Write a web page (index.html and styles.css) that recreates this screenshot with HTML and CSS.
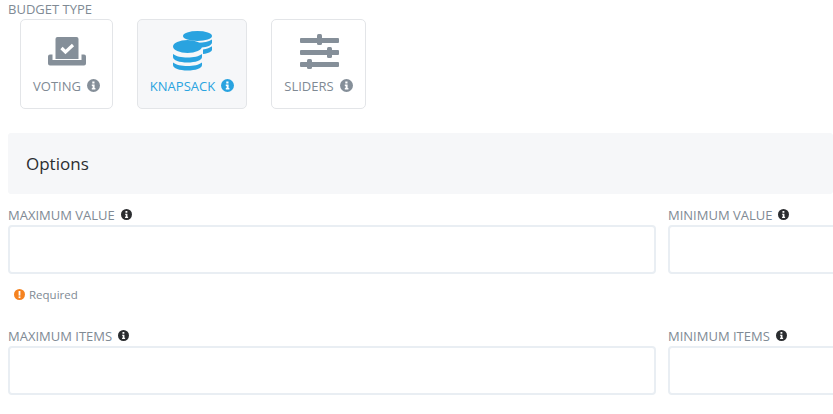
FILE: index.html
```html
<!DOCTYPE html>
<html lang="en">
<head>
<meta charset="utf-8">
<title>Budget type</title>
<link rel="stylesheet" href="styles.css">
</head>
<body>
<div class="page">
  <div class="section-label">BUDGET TYPE</div>
  <div class="cards">
    <div class="card card-voting">
      <div class="icon-slot"><svg width="40" height="29" viewBox="0 0 40 29"><path fill="#858f99" d="M8.500 2a2 2 0 0 1 2-2h19a2 2 0 0 1 2 2v20h-23z"/><path fill="#858f99" d="M1 19.500a2 2 0 0 1 2-2h2.500v5.500h29v-5.500H37a2 2 0 0 1 2 2v7a2 2 0 0 1-2 2H3a2 2 0 0 1-2-2z"/><path fill="none" stroke="#fff" stroke-width="3.200" d="M14.500 11l4 4 7.500-7"/></svg></div>
      <div class="card-label"><span>VOTING</span><svg width="13" height="13" viewBox="0 0 13 13"><circle cx="6.500" cy="6.500" r="6.500" fill="#858f99"/><path fill="#fff" d="M5.300 2.500h2.200v2H5.300zM4.800 5.500h2.800v3.600h.8v1.400H4.800V9.100h.8V6.900h-.8z"/></svg></div>
    </div>
    <div class="card card-active">
      <div class="icon-slot"><svg width="40" height="40" viewBox="0 0 40 40"><g fill="#29a3e0"><ellipse cx="25.500" cy="5" rx="14.500" ry="5"/><path d="M26 11.800c5.500 0 10.500-1 14-3.300v3c0 2.600-4.800 4.800-10.500 5-1-1.800-3-3.500-6-4.500z"/><path d="M31 18.500c3.700-.4 7-1.600 9-3.200v3.200c0 2-3 3.800-9 4.500z"/><ellipse cx="15.500" cy="15.500" rx="14.500" ry="6.500"/><path d="M1 23c3 2.400 8.500 3.500 14.500 3.500S27 25.400 30 23v3c0 3.300-6.500 5.500-14.500 5.500S1 29.300 1 26z"/><path d="M1 31.500c3 2.400 8.500 3.500 14.500 3.500S27 33.900 30 31.500V34c0 3.300-6.500 5.500-14.500 5.500S1 37.300 1 34z"/></g></svg></div>
      <div class="card-label"><span>KNAPSACK</span><svg width="13" height="13" viewBox="0 0 13 13"><circle cx="6.500" cy="6.500" r="6.500" fill="#29a3e0"/><path fill="#fff" d="M5.300 2.500h2.200v2H5.300zM4.800 5.500h2.800v3.600h.8v1.400H4.800V9.100h.8V6.900h-.8z"/></svg></div>
    </div>
    <div class="card card-sliders">
      <div class="icon-slot"><svg width="40" height="35" viewBox="0 0 40 35"><g fill="#858f99"><rect x="1" y="4" width="39" height="5" rx="1"/><rect x="1" y="16" width="39" height="5" rx="1"/><rect x="1" y="28" width="39" height="5" rx="1"/><rect x="18" y="0" width="5" height="11" rx="1.500"/><rect x="28" y="13" width="5" height="11" rx="1.500"/><rect x="8" y="25" width="5" height="10" rx="1.500"/></g></svg></div>
      <div class="card-label"><span>SLIDERS</span><svg width="13" height="13" viewBox="0 0 13 13"><circle cx="6.500" cy="6.500" r="6.500" fill="#858f99"/><path fill="#fff" d="M5.300 2.500h2.200v2H5.300zM4.800 5.500h2.800v3.600h.8v1.400H4.800V9.100h.8V6.900h-.8z"/></svg></div>
    </div>
  </div>
  <div class="band">Options</div>
  <div class="fields">
    <div class="field">
      <label class="field-label">MAXIMUM VALUE<svg width="11" height="11" viewBox="0 0 13 13"><circle cx="6.500" cy="6.500" r="6.500" fill="#2b2d30"/><path fill="#fff" d="M5.300 2.500h2.200v2H5.300zM4.800 5.500h2.800v3.600h.8v1.400H4.800V9.100h.8V6.900h-.8z"/></svg></label>
      <div class="input"></div>
      <div class="error"><svg width="11" height="11" viewBox="0 0 11 11"><circle cx="5.500" cy="5.500" r="5.500" fill="#f5821f"/><rect x="4.600" y="2" width="1.800" height="4.600" fill="#fff"/><rect x="4.600" y="7.400" width="1.800" height="1.700" fill="#fff"/></svg><span>Required</span></div>
    </div>
    <div class="field">
      <label class="field-label">MINIMUM VALUE<svg width="11" height="11" viewBox="0 0 13 13"><circle cx="6.500" cy="6.500" r="6.500" fill="#2b2d30"/><path fill="#fff" d="M5.300 2.500h2.200v2H5.300zM4.800 5.500h2.800v3.600h.8v1.400H4.800V9.100h.8V6.900h-.8z"/></svg></label>
      <div class="input"></div>
    </div>
    <div class="field">
      <label class="field-label">MAXIMUM ITEMS<svg width="11" height="11" viewBox="0 0 13 13"><circle cx="6.500" cy="6.500" r="6.500" fill="#2b2d30"/><path fill="#fff" d="M5.300 2.500h2.200v2H5.300zM4.800 5.500h2.800v3.600h.8v1.400H4.800V9.100h.8V6.900h-.8z"/></svg></label>
      <div class="input"></div>
    </div>
    <div class="field">
      <label class="field-label">MINIMUM ITEMS<svg width="11" height="11" viewBox="0 0 13 13"><circle cx="6.500" cy="6.500" r="6.500" fill="#2b2d30"/><path fill="#fff" d="M5.300 2.500h2.200v2H5.300zM4.800 5.500h2.800v3.600h.8v1.400H4.800V9.100h.8V6.900h-.8z"/></svg></label>
      <div class="input"></div>
    </div>
  </div>
</div>
</body>
</html>
```
FILE: styles.css
```css
html, body {
  margin: 0;
  height: 414px;
  overflow: hidden;
  background: #fff;
}
.page {
  width: 825px;
  padding: 1px 0 0 8px;
  overflow: hidden;
  font-family: "Open Sans", sans-serif;
}
.section-label {
  font-size: 13px;
  line-height: 16px;
  color: #808a94;
}
.cards {
  display: flex;
  gap: 24px;
  margin: 2px 0 24px 12px;
}
.card {
  box-sizing: border-box;
  height: 90px;
  padding-top: 11px;
  border: 1px solid #e3e5e8;
  border-radius: 5px;
  display: flex;
  flex-direction: column;
  align-items: center;
  color: #808a94;
}
.card-voting { width: 93px; }
.card-active {
  width: 110px;
  background: #f6f7f9;
  color: #29a3e0;
}
.card-sliders { width: 95px; }
.icon-slot {
  height: 40px;
  display: flex;
  align-items: center;
  justify-content: center;
}
.icon-slot svg { display: block; }
.card-label {
  display: flex;
  align-items: center;
  gap: 6px;
  margin-top: 7px;
  font-size: 13px;
  line-height: 16px;
}
.card-label svg { margin-top: -2px; }
.band {
  box-sizing: border-box;
  height: 61px;
  padding: 0 18px;
  background: #f6f7f9;
  border-radius: 3px;
  font-size: 17px;
  line-height: 61px;
  color: #2b2d30;
}
.fields {
  display: grid;
  grid-template-columns: 648px 300px;
  column-gap: 12px;
  row-gap: 25px;
  padding-top: 12px;
}
.field-label {
  box-sizing: border-box;
  display: flex;
  align-items: center;
  gap: 6px;
  height: 19px;
  padding-bottom: 2px;
  font-size: 13px;
  color: #808a94;
}
.input {
  box-sizing: border-box;
  height: 49px;
  border: 2px solid #e9eef3;
  border-radius: 4px;
  background: #fff;
}
.error {
  display: flex;
  align-items: center;
  gap: 4px;
  height: 16px;
  margin: 12px 0 0 6px;
  font-size: 11.5px;
  color: #808a94;
}
```
